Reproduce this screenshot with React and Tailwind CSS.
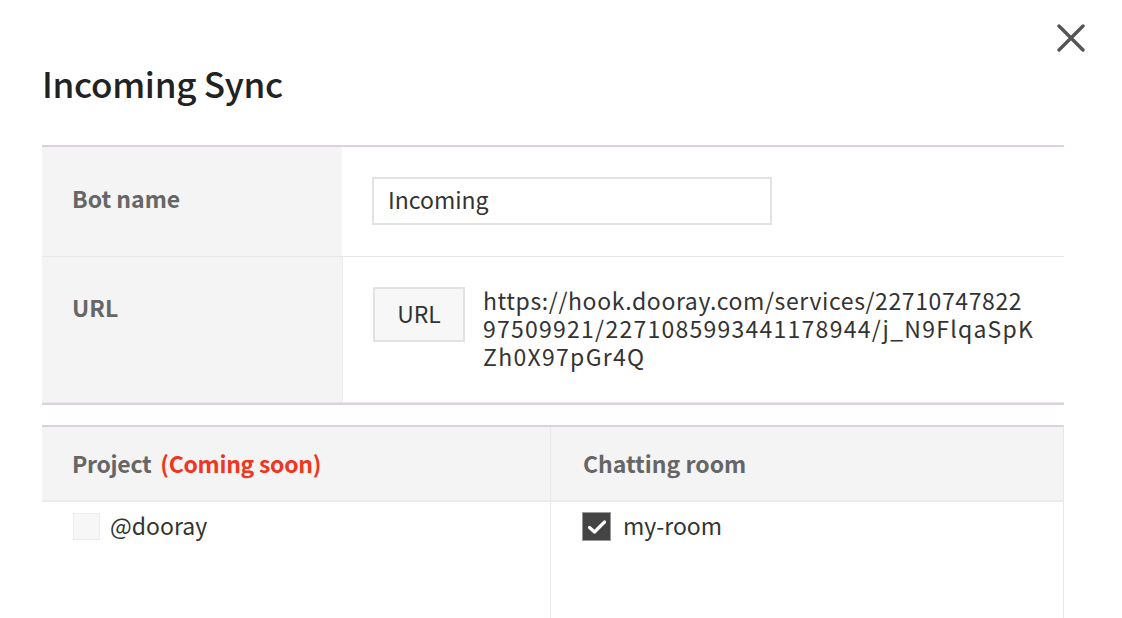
import React from "react";

const font = { fontFamily: '"Noto Sans CJK KR", "Noto Sans", sans-serif' };

export default function App() {
  return (
    <div className="w-[1122px] h-[618px] bg-white overflow-hidden relative" style={font}>
      <button className="absolute left-[1055px] top-[22px] w-[31px] h-[31px] flex items-center justify-center">
        <svg width="28" height="28" viewBox="0 0 28 28">
          <path d="M2 2 L26 26 M26 2 L2 26" stroke="#555" strokeWidth="3.4" strokeLinecap="round" />
        </svg>
      </button>
      <div className="pl-[42px] pr-[58px]">
        <h1 className="pt-[60px] h-[145px] text-[35px] leading-[46px] text-[#222] font-medium tracking-[-0.3px]">
          Incoming Sync
        </h1>

        <div className="border-t-2 border-[#ddd0e2] border-b-2 border-b-[#ddd0e2]">
          <div className="flex border-b border-[#e8e8e8]">
            <div className="w-[300px] bg-[#f4f4f4] pl-[30px] pt-[37px] text-[23px] leading-[28px] font-bold text-[#666]">
              Bot name
            </div>
            <div className="flex-1 pl-[30px] pt-[30px] pb-[31px]">
              <div className="w-[400px] h-[48px] border-2 border-[#e2e2e2] flex items-center pl-[14px] pb-[3px] text-[23px] text-[#333]">
                Incoming
              </div>
            </div>
          </div>
          <div className="flex border-b border-[#e8e8e8]">
            <div className="w-[300px] bg-[#f4f4f4] pl-[30px] pt-[36px] text-[23px] leading-[28px] font-bold text-[#666]">
              URL
            </div>
            <div className="flex-1 pl-[30px] pt-[30px] pb-[32px] flex gap-[18px] border-l border-[#eee]">
              <div className="w-[92px] h-[55px] shrink-0 border-2 border-[#e2e2e2] bg-[#f7f7f7] flex items-center justify-center pb-[2px] text-[23px] text-[#333]">
                URL
              </div>
              <div className="text-[23px] leading-[28px] text-[#333] -mt-[1px]">
                <div className="tracking-[0.6px]">https://hook.dooray.com/services/22710747822</div>
                <div className="tracking-[1.25px]">97509921/2271085993441178944/j_N9FlqaSpK</div>
                <div className="tracking-[1.3px]">Zh0X97pGr4Q</div>
              </div>
            </div>
          </div>
        </div>

        <div className="mt-[20px] border-t-2 border-[#ddd0e2] border-r border-r-[#e8e8e8] grid grid-cols-[509px_1fr]">
          <div className="h-[75px] bg-[#f4f4f4] border-b-2 border-[#ebebeb] border-r border-r-[#e8e8e8] flex items-center pl-[30px] text-[23px] font-bold text-[#666] tracking-[-0.3px]">
            Project<span className="ml-[9px] text-[#f03520]">(Coming soon)</span>
          </div>
          <div className="h-[75px] bg-[#f4f4f4] border-b-2 border-[#ebebeb] flex items-center pl-[32px] text-[23px] font-bold text-[#666]">
            Chatting room
          </div>
          <div className="h-[200px] border-r border-[#e8e8e8] pl-[31px] pt-[9px] flex items-start gap-[10px]">
            <div className="w-[27px] h-[27px] mt-[2px] bg-[#f7f7f7] border border-[#ececec]" />
            <span className="text-[23px] leading-[28px] text-[#333]">@dooray</span>
          </div>
          <div className="h-[200px] pl-[31px] pt-[9px] flex items-start gap-[12px]">
            <div className="w-[29px] h-[29px] mt-[1px] bg-[#444] border border-[#999] flex items-center justify-center">
              <svg width="20" height="16" viewBox="0 0 20 16">
                <path d="M2.5 8.5 L7.5 13 L17.5 3" stroke="#fff" strokeWidth="3.2" fill="none" strokeLinecap="round" strokeLinejoin="round" />
              </svg>
            </div>
            <span className="text-[23px] leading-[28px] text-[#333]">my-room</span>
          </div>
        </div>
      </div>
    </div>
  );
}
